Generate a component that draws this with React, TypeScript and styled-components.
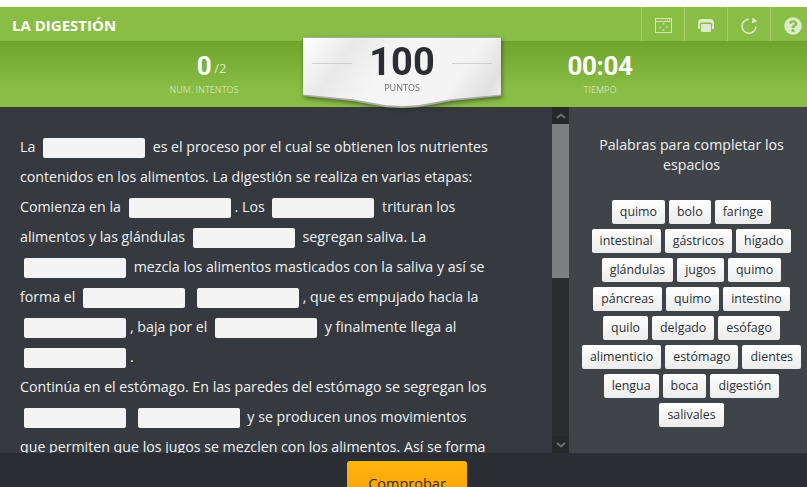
import React from "react";
import styled, { createGlobalStyle } from "styled-components";
import { FaQuestionCircle } from "react-icons/fa";

const words = [
  "quimo", "bolo", "faringe", "intestinal", "gástricos", "hígado", "glándulas", "jugos", "quimo",
  "páncreas", "quimo", "intestino", "quilo", "delgado", "esófago", "alimenticio", "estómago", "dientes",
  "lengua", "boca", "digestión", "salivales",
];

const App = () => {
  return (
    <Page>
      <GlobalStyle />
      <TitleBar>
        <Title>LA DIGESTIÓN</Title>
        <Tools>
          <Tool>
            <svg width="17" height="15" viewBox="0 0 17 15" fill="none" stroke="#d3e5b9" strokeWidth="1">
              <rect x="0.5" y="0.5" width="16" height="14" />
              <path d="M0.5 3.5h16M10 2h1M12 2h1M14 2h1" />
              <path d="M8.5 5l1.5 1.500h-3zM8.500 13l1.500-1.500h-3zM4 9.200l1.500-1.500v3zM13 9.200l-1.500-1.500v3z" fill="#d3e5b9" stroke="none" />
            </svg>
          </Tool>
          <Tool>
            <svg width="16" height="13" viewBox="0 0 16 13" fill="#dcebc8">
              <path d="M4 0h8a4 4 0 0 1 4 4v6h-2V5.500a2 2 0 0 0-2-2H4a2 2 0 0 0-2 2V10H0V4a4 4 0 0 1 4-4z" />
              <rect x="3" y="5" width="10" height="8" rx="1" />
            </svg>
          </Tool>
          <Tool>
            <svg width="18" height="17" viewBox="0 0 18 17" fill="none" stroke="#dcebc8" strokeWidth="1.6">
              <path d="M9 2.200a7 7 0 1 0 7 7.300" />
              <path d="M12.500 0.500l5 3.800-5.600 2.200z" fill="#dcebc8" stroke="none" />
            </svg>
          </Tool>
          <HelpTool>
            <FaQuestionCircle size={18} color="#dcebc8" />
          </HelpTool>
        </Tools>
      </TitleBar>
      <StatsBar>
        <Stat>
          <StatValue>
            0<StatTotal>/2</StatTotal>
          </StatValue>
          <StatLabel>NUM. INTENTOS</StatLabel>
        </Stat>
        <ScoreShadow>
          <ScoreCard>
            <ScoreRow>
              <ScoreRule />
              <ScoreValue>100</ScoreValue>
              <ScoreRule />
            </ScoreRow>
            <ScoreLabel>PUNTOS</ScoreLabel>
          </ScoreCard>
        </ScoreShadow>
        <Stat>
          <StatValue>00:04</StatValue>
          <StatLabel>TIEMPO</StatLabel>
        </Stat>
      </StatsBar>
      <Body>
        <TextPanel>
          <Passage>
            La <Blank /> es el proceso por el cual se obtienen los nutrientes<br />
            contenidos en los alimentos. La digestión se realiza en varias etapas:<br />
            Comienza en la <Blank />. Los <Blank /> trituran los<br />
            alimentos y las glándulas <Blank /> segregan saliva. La<br />
            <Blank /> mezcla los alimentos masticados con la saliva y así se<br />
            forma el <Blank /> <Blank />, que es empujado hacia la<br />
            <Blank />, baja por el <Blank /> y finalmente llega al<br />
            <Blank />.<br />
            Continúa en el estómago. En las paredes del estómago se segregan los<br />
            <Blank /> <Blank /> y se producen unos movimientos<br />
            que permiten que los jugos se mezclen con los alimentos. Así se forma
          </Passage>
        </TextPanel>
        <ScrollBar>
          <ScrollArrow>
            <svg width="10" height="6" viewBox="0 0 10 6" fill="none" stroke="#6c6e72" strokeWidth="2">
              <path d="M1 5l4-3.500L9 5" />
            </svg>
          </ScrollArrow>
          <ScrollThumb />
          <ScrollTrack />
          <ScrollArrow>
            <svg width="10" height="6" viewBox="0 0 10 6" fill="none" stroke="#6c6e72" strokeWidth="2">
              <path d="M1 1l4 3.500L9 1" />
            </svg>
          </ScrollArrow>
        </ScrollBar>
        <WordPanel>
          <WordHeading>Palabras para completar los espacios</WordHeading>
          <WordList>
            {words.map((word, i) => (
              <Word key={i}>{word}</Word>
            ))}
          </WordList>
        </WordPanel>
      </Body>
      <Footer>
        <CheckButton>Comprobar</CheckButton>
      </Footer>
    </Page>
  );
};

const GlobalStyle = createGlobalStyle`
  html, body {
    margin: 0;
    height: 100%;
    overflow: hidden;
    background: #fff;
  }
  #root {
    height: 100%;
  }
`;

const Page = styled.div`
  height: 487px;
  padding-top: 7px;
  box-sizing: border-box;
  display: flex;
  flex-direction: column;
  overflow: hidden;
  font-family: "Open Sans", "Noto Sans", sans-serif;
`;

const TitleBar = styled.header`
  height: 34px;
  flex: none;
  display: flex;
  justify-content: space-between;
  align-items: stretch;
  background: #8abd45;
`;

const Title = styled.h1`
  margin: 0;
  padding-left: 12px;
  font-size: 15px;
  font-weight: 700;
  line-height: 37px;
  color: #fff;
`;

const Tools = styled.div`
  display: flex;
`;

const Tool = styled.div`
  width: 43px;
  box-sizing: border-box;
  border-left: 1px solid rgba(255, 255, 255, 0.25);
  display: flex;
  align-items: center;
  justify-content: center;
  padding-top: 3px;
`;

const HelpTool = styled(Tool)`
  width: 37px;
  padding-left: 7px;
`;

const StatsBar = styled.section`
  position: relative;
  z-index: 2;
  height: 66px;
  flex: none;
  display: flex;
  justify-content: center;
  padding-right: 3px;
  background: linear-gradient(#6ea42d, #8abd45 75%);
`;

const Stat = styled.div`
  width: 198px;
  flex: none;
  display: flex;
  flex-direction: column;
  align-items: center;
  padding-top: 11px;
`;

const StatValue = styled.div`
  position: relative;
  font-family: Roboto, sans-serif;
  font-size: 26px;
  font-weight: 700;
  line-height: 28px;
  letter-spacing: -0.4px;
  color: #fff;
`;

const StatTotal = styled.span`
  position: absolute;
  left: 100%;
  top: 8px;
  margin-left: 3px;
  font-family: "Open Sans", sans-serif;
  font-size: 13px;
  font-weight: 400;
  line-height: 16px;
  letter-spacing: 0;
  color: #dcebc8;
`;

const StatLabel = styled.div`
  margin-top: 3px;
  font-size: 9px;
  line-height: 14px;
  color: #c9dfa9;
`;

const ScoreShadow = styled.div`
  width: 198px;
  height: 71px;
  flex: none;
  margin-top: -4px;
  filter: drop-shadow(1px 2px 2px rgba(30, 40, 20, 0.55));
`;

const ScoreCard = styled.div`
  position: relative;
  height: 100%;
  box-sizing: border-box;
  padding-top: 5px;
  background: #a9aca4;
  clip-path: polygon(0 0, 100% 0, 100% 83%, 75% 90%, 58% 99%, 50% 100%, 42% 99%, 25% 90%, 0 83%);
  display: flex;
  flex-direction: column;
  align-items: center;

  &::before {
    content: "";
    position: absolute;
    inset: 1px 0 2px 0;
    background: linear-gradient(125deg, #fff 0%, #e9e9e9 22%, #f5f5f5 42%, #f4f4f4 74%, #e0e0e0 90%, #f4f4f4 100%);
    clip-path: polygon(0 0, 100% 0, 100% 83%, 75% 90%, 58% 99%, 50% 100%, 42% 99%, 25% 90%, 0 83%);
  }

  & > * {
    position: relative;
  }
`;

const ScoreRow = styled.div`
  width: 100%;
  display: flex;
  align-items: center;
  justify-content: center;
  gap: 17px;
`;

const ScoreRule = styled.div`
  width: 40px;
  height: 1px;
  margin-top: 3px;
  background: #cfcfcf;
`;

const ScoreValue = styled.div`
  font-family: Roboto, sans-serif;
  font-size: 38px;
  font-weight: 700;
  line-height: 40px;
  color: #2c2d31;
`;

const ScoreLabel = styled.div`
  font-size: 9px;
  line-height: 12px;
  color: #6a6a6a;
`;

const Body = styled.main`
  flex: 1;
  min-height: 0;
  display: flex;
  background: #404348;
`;

const TextPanel = styled.div`
  width: 552px;
  flex: none;
  box-sizing: border-box;
  padding: 25px 0 0 20px;
  overflow: hidden;
  background: #363a40;
`;

const Passage = styled.p`
  margin: 0;
  font-size: 14.2px;
  line-height: 30px;
  white-space: nowrap;
  color: #f0f2f2;
`;

const Blank = styled.span`
  display: inline-block;
  width: 102px;
  height: 20px;
  margin: 0 4px;
  vertical-align: -6px;
  border-radius: 2px;
  background: #f4f4f4;
`;

const ScrollBar = styled.div`
  width: 17px;
  flex: none;
  display: flex;
  flex-direction: column;
  background: #2b2c30;
`;

const ScrollArrow = styled.div`
  height: 17px;
  flex: none;
  display: flex;
  align-items: center;
  justify-content: center;
  background: #27282c;
`;

const ScrollThumb = styled.div`
  height: 154px;
  flex: none;
  background: #7e7f83;
`;

const ScrollTrack = styled.div`
  flex: 1;
`;

const WordPanel = styled.aside`
  flex: 1;
  min-width: 0;
  padding: 28px 4px 0 11px;
  display: flex;
  flex-direction: column;
  align-items: center;
`;

const WordHeading = styled.h2`
  margin: 0;
  width: 200px;
  font-size: 14.2px;
  font-weight: 400;
  line-height: 20px;
  text-align: center;
  color: #f0f2f2;
`;

const WordList = styled.div`
  margin-top: 25px;
  display: flex;
  flex-wrap: wrap;
  justify-content: center;
  gap: 5px 4px;
`;

const Word = styled.div`
  height: 24px;
  padding: 0 8px;
  border-radius: 2px;
  font-size: 12.4px;
  line-height: 24px;
  color: #2c2e33;
  background: linear-gradient(#fff, #ececec);
`;

const Footer = styled.footer`
  height: 34px;
  flex: none;
  display: flex;
  justify-content: center;
  padding-top: 8px;
  box-sizing: border-box;
  background: #2a2d34;
`;

const CheckButton = styled.button`
  width: 120px;
  height: 40px;
  flex: none;
  margin-left: 7px;
  border: 0;
  border-radius: 3px;
  padding: 3px 0 0;
  font-family: "Open Sans", sans-serif;
  font-size: 14.5px;
  line-height: 40px;
  color: #3a2c06;
  background: linear-gradient(#ffb50c, #f89f06);
`;

export default App;
